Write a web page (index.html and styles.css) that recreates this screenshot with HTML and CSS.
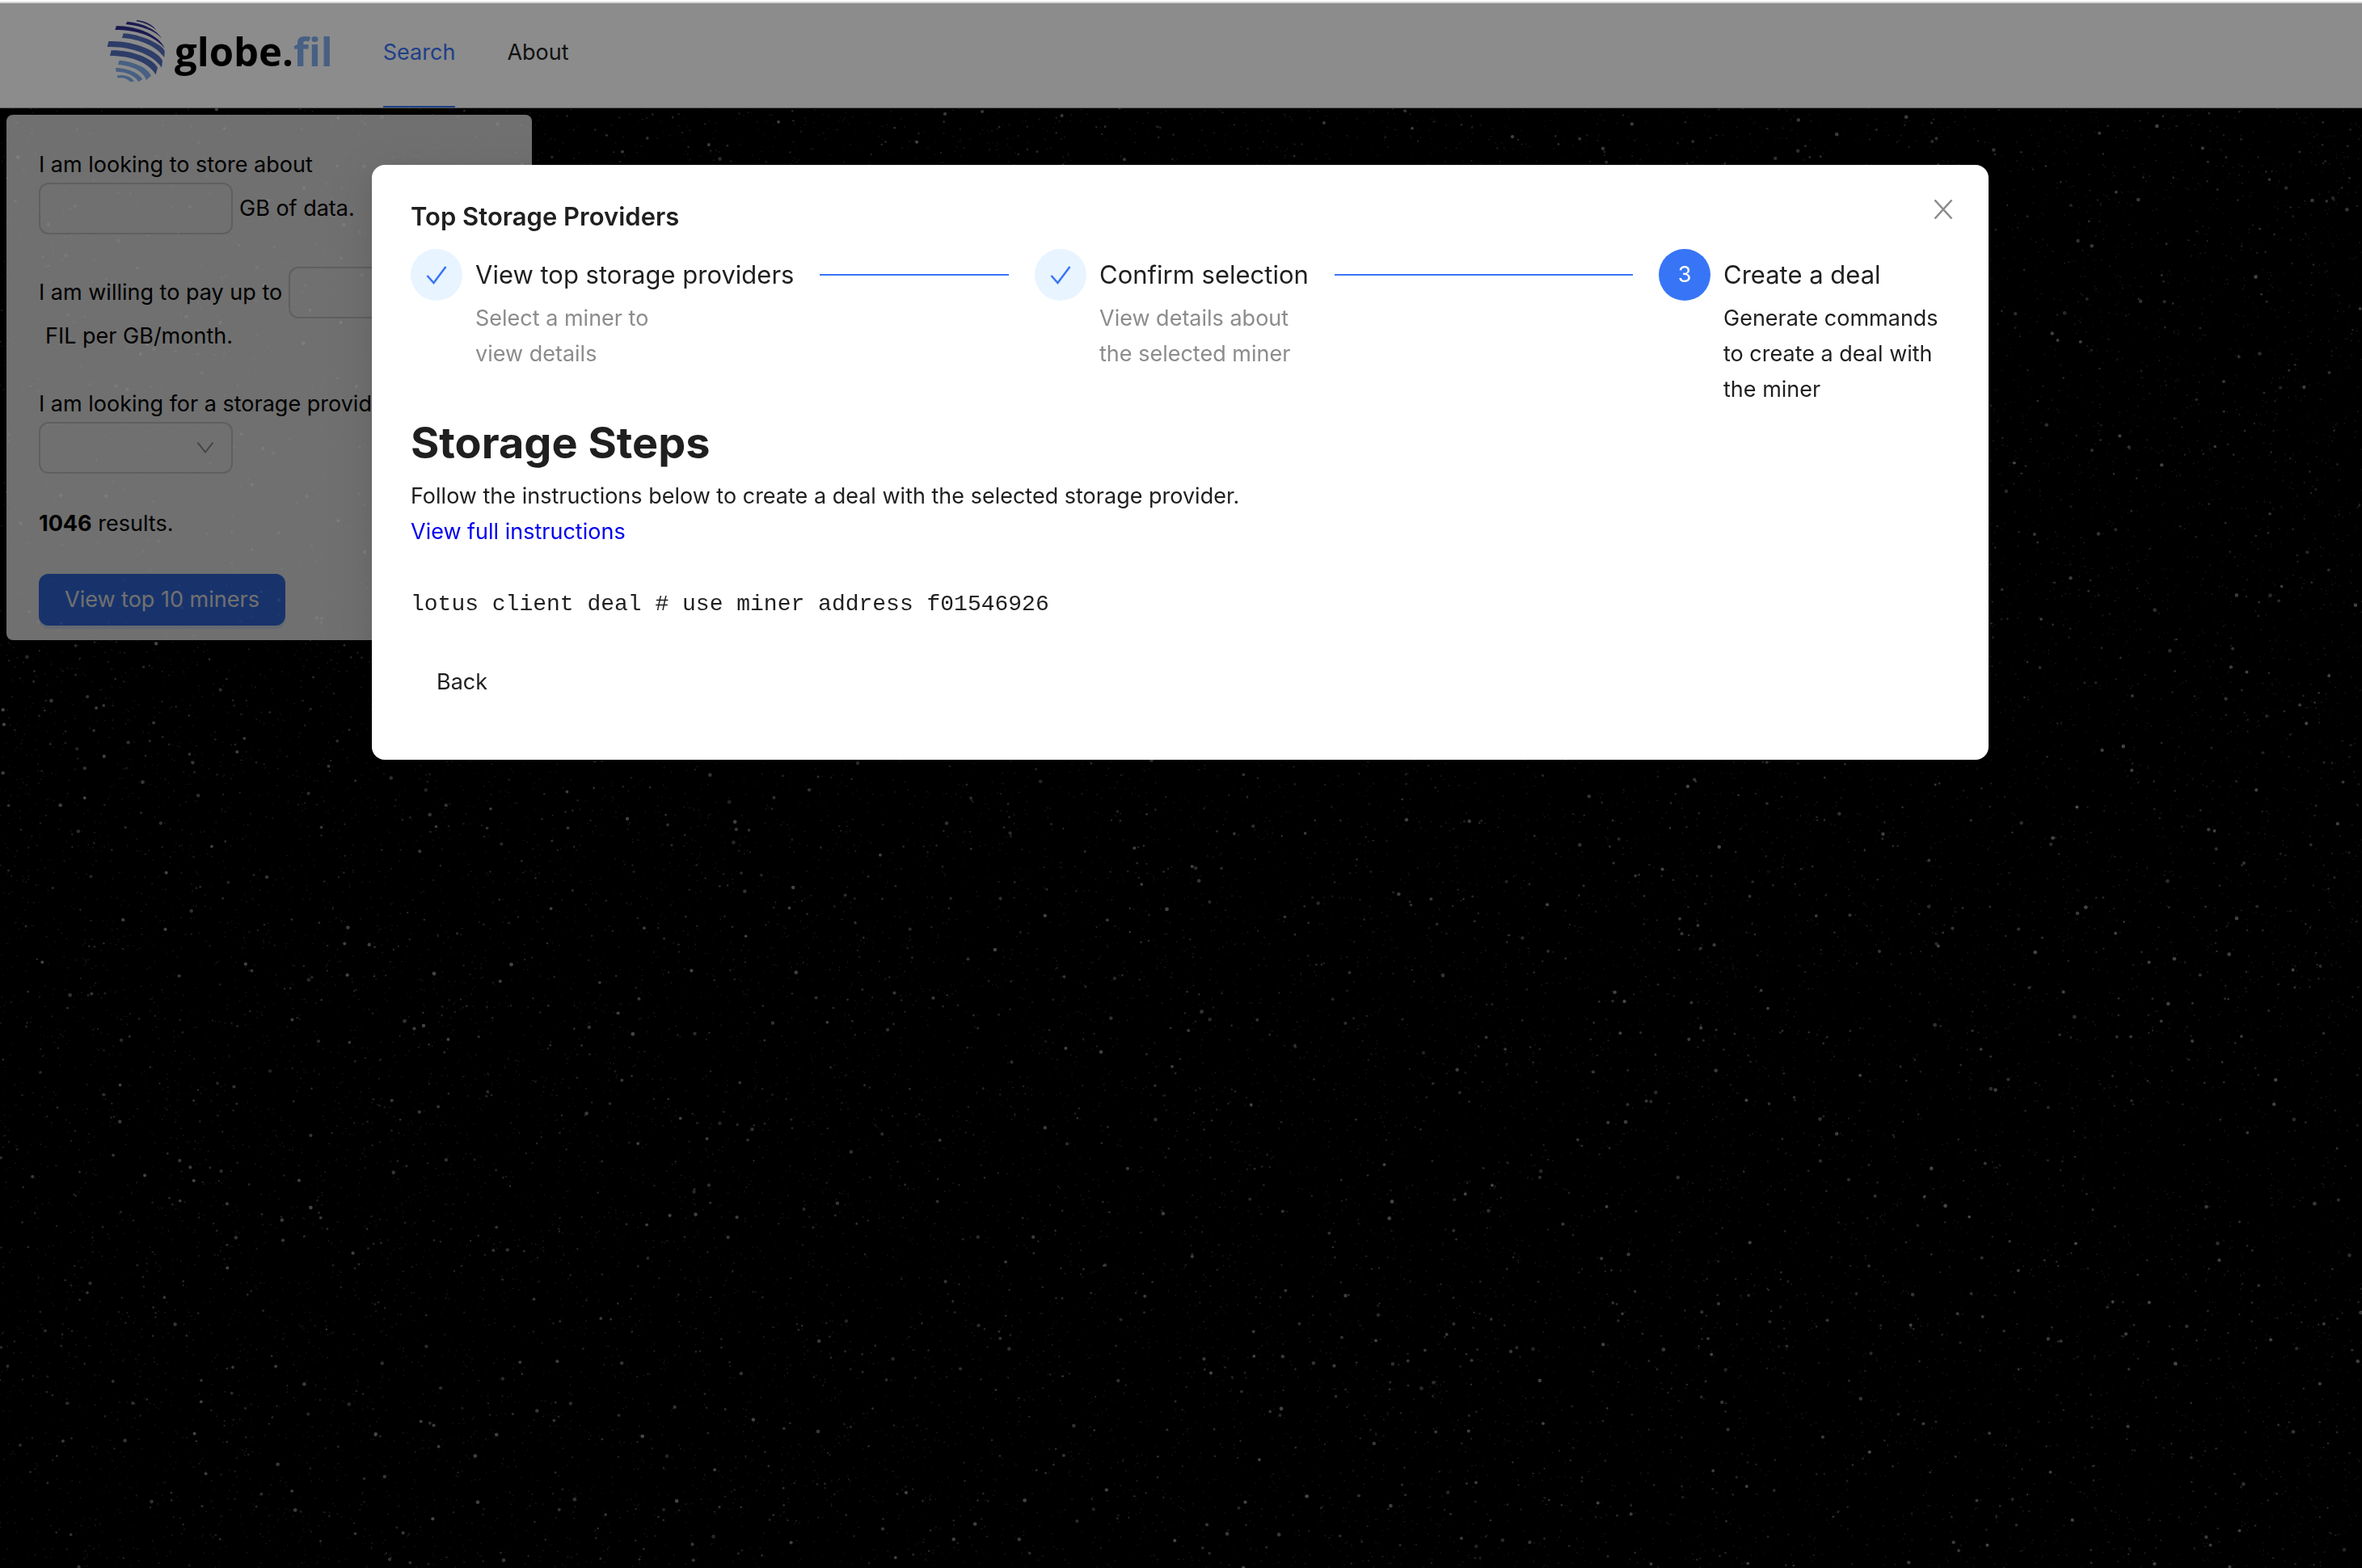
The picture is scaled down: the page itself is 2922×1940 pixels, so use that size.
FILE: index.html
```html
<!DOCTYPE html>
<html lang="en">
<head>
<meta charset="utf-8">
<title>globe.fil</title>
<meta name="viewport" content="width=device-width, initial-scale=1">
<link rel="stylesheet" href="styles.css">
</head>
<body>
<div class="app">
  <canvas class="stars" id="stars"></canvas>

  <header class="header">
    <a class="brand" href="#">
      <svg class="brand-mark" viewBox="36 27 216 234" aria-hidden="true">
        <g fill="#303094">
          <path d="M147 29C180 33 206 45 222 69C200 49 175 39 147 34Z"/>
          <path d="M112 35C170 41 222 65 241 98C215 69 165 51 107 45Z"/>
          <path d="M72 51C150 51 232 86 251 134C215 90 150 66 67 66Z"/>
        </g>
        <g fill="#5570be">
          <path d="M98 79C155 81 240 116 251 144L250 168C218 125 155 99 93 96Z"/>
          <path d="M43 108C130 104 228 143 243 180L240 206C212 160 130 126 38 129Z"/>
          <path d="M53 142C125 140 205 170 225 206L218 232C192 188 130 162 48 162Z"/>
        </g>
        <g fill="#82b0ee">
          <path d="M83 179C130 182 188 204 201 236L183 252C172 220 130 198 78 195Z"/>
          <path d="M69 207C110 208 152 222 169 249L154 259C140 235 110 221 71 221Z"/>
          <path d="M74 236C100 230 128 240 138 257L124 259C112 246 95 241 78 245Z"/>
        </g>
      </svg>
      <span class="brand-name">globe.<span class="brand-tld">fil</span></span>
    </a>
    <nav class="nav">
      <a class="nav-link nav-link-active" href="#search">Search</a>
      <a class="nav-link" href="#about">About</a>
    </nav>
  </header>

  <main class="content">
    <form class="panel">
      <div class="field">
        <label class="line" for="size">I am looking to store about</label>
        <div class="row">
          <input class="control" id="size" type="text">
          <span>GB of data.</span>
        </div>
      </div>
      <div class="field">
        <div class="row">
          <label for="price">I am willing to pay up to</label>
          <input class="control" id="price" type="text">
        </div>
        <span class="line line-indent">FIL per GB/month.</span>
      </div>
      <div class="field">
        <label class="line" for="region">I am looking for a storage provider in</label>
        <div class="select-box">
          <select class="control control-select" id="region"><option></option></select>
          <svg class="select-arrow" viewBox="0 0 24 24" aria-hidden="true"><path d="M2.500 5.500L12 17.500L21.500 5.500" fill="none" stroke="currentColor" stroke-width="2"/></svg>
        </div>
      </div>
      <p class="line"><strong>1046</strong> results.</p>
      <button class="button button-primary" type="button">View top 10 miners</button>
    </form>
  </main>

  <div class="mask"></div>

  <div class="modal-wrap">
    <section class="modal" role="dialog" aria-modal="true" aria-labelledby="modal-title">
      <button class="modal-close" type="button" aria-label="Close">
        <svg viewBox="0 0 24 24" aria-hidden="true"><path d="M1.500 0.500L22.500 23.500M22.500 0.500L1.500 23.500" fill="none" stroke="currentColor" stroke-width="2.500"/></svg>
      </button>
      <h2 class="modal-title" id="modal-title">Top Storage Providers</h2>

      <ol class="steps">
        <li class="step">
          <span class="step-icon"><svg viewBox="0 0 28 28" aria-hidden="true"><path d="M2.500 15L10.500 24L25.500 4" fill="none" stroke="currentColor" stroke-width="2.500"/></svg></span>
          <div class="step-body">
            <div class="step-title">View top storage providers</div>
            <p class="step-text">Select a miner to view details</p>
          </div>
        </li>
        <li class="step">
          <span class="step-icon"><svg viewBox="0 0 28 28" aria-hidden="true"><path d="M2.500 15L10.500 24L25.500 4" fill="none" stroke="currentColor" stroke-width="2.500"/></svg></span>
          <div class="step-body">
            <div class="step-title">Confirm selection</div>
            <p class="step-text">View details about the selected miner</p>
          </div>
        </li>
        <li class="step step-current">
          <span class="step-icon">3</span>
          <div class="step-body">
            <div class="step-title">Create a deal</div>
            <p class="step-text">Generate commands to create a deal with the miner</p>
          </div>
        </li>
      </ol>

      <h1 class="heading">Storage Steps</h1>
      <p class="line">Follow the instructions below to create a deal with the selected storage provider.</p>
      <a class="docs-link" href="#instructions">View full instructions</a>
      <pre class="command"><code>lotus client deal # use miner address f01546926</code></pre>
      <button class="button button-text" type="button">Back</button>
    </section>
  </div>
</div>
<script src="script.js"></script>
</body>
</html>
```

FILE: styles.css
```css
* {
  box-sizing: border-box;
}

body {
  margin: 0;
  border-top: 2px solid #fff;
  background: #000;
  color: #1f1f1f;
  font-family: Inter, "Liberation Sans", sans-serif;
  font-size: 27px;
  line-height: 44px;
}

h1, h2, p, ol, pre {
  margin: 0;
  padding: 0;
}

a {
  text-decoration: none;
}

button, input, select {
  font: inherit;
}

.app {
  position: relative;
  min-height: calc(100vh - 2px);
  border-top: 2px solid #d6d6d6;
  overflow: hidden;
}

.stars {
  position: absolute;
  inset: 0;
  width: 100%;
  height: 100%;
}

/* Header */

.header {
  position: relative;
  display: flex;
  gap: 62px;
  height: 130px;
  padding-left: 132px;
  background: #fff;
  border-bottom: 1px solid #a6a6a6;
}

.brand {
  display: flex;
  align-items: center;
  gap: 12px;
  padding-bottom: 12px;
  color: #000;
}

.brand-mark {
  width: 72px;
  height: 78px;
}

.brand-name {
  font-family: "Open Sans", "Noto Sans", sans-serif;
  font-size: 49px;
  font-weight: 700;
  line-height: 64px;
}

.brand-tld {
  color: #82b0ee;
}

.nav {
  display: flex;
  gap: 64px;
}

.nav-link {
  padding: 39px 0 43px;
  border-bottom: 2px solid transparent;
  color: #1f1f1f;
}

.nav-link-active {
  color: #3875f6;
  border-bottom-color: #3875f6;
}

/* Search panel */

.content {
  position: relative;
  padding: 8px;
}

.panel {
  display: flex;
  flex-direction: column;
  align-items: flex-start;
  gap: 40px;
  width: 650px;
  max-width: 100%;
  padding: 40px 40px 18px;
  border-radius: 8px;
  background: #fff;
  color: #000;
  opacity: 0.8;
}

.field, .line {
  display: block;
}

.line-indent {
  padding-left: 8px;
}

.row {
  display: flex;
  align-items: center;
  gap: 8px;
  white-space: nowrap;
}

.control {
  display: block;
  width: 240px;
  height: 64px;
  padding: 0 20px;
  border: 2px solid #d9d9d9;
  border-radius: 12px;
  background: #fff;
  color: inherit;
}

.control-select {
  appearance: none;
}

.select-box {
  position: relative;
  width: 240px;
}

.select-arrow {
  position: absolute;
  top: 20px;
  right: 22px;
  width: 24px;
  height: 24px;
  color: #9a9a9a;
  pointer-events: none;
}

.button {
  height: 64px;
  padding: 0 32px;
  border: 0;
  border-radius: 12px;
  line-height: 44px;
}

.button-primary {
  background: #3875f6;
  box-shadow: 0 4px 0 rgba(5, 95, 255, 0.1);
  color: #fff;
}

.button-text {
  background: transparent;
  color: #1f1f1f;
}

/* Modal */

.mask {
  position: absolute;
  inset: 0;
  background: rgba(0, 0, 0, 0.45);
}

.modal-wrap {
  position: absolute;
  inset: 0;
  display: flex;
  justify-content: center;
  align-items: flex-start;
  padding: 200px 32px 32px 30px;
}

.modal {
  position: relative;
  width: 2000px;
  max-width: 100%;
  padding: 40px 48px 64px;
  border-radius: 16px;
  background: #fff;
  box-shadow: 0 12px 32px rgba(0, 0, 0, 0.08), 0 6px 12px -8px rgba(0, 0, 0, 0.12), 0 18px 56px 16px rgba(0, 0, 0, 0.05);
}

.modal-close {
  position: absolute;
  top: 33px;
  right: 34px;
  display: flex;
  align-items: center;
  justify-content: center;
  width: 44px;
  height: 44px;
  padding: 0;
  border: 0;
  background: transparent;
  color: #8c8c8c;
}

.modal-close svg {
  width: 24px;
  height: 24px;
}

.modal-title {
  margin-bottom: 16px;
  font-size: 31px;
  font-weight: 600;
  line-height: 48px;
}

.steps {
  display: grid;
  grid-template-columns: 1fr 1fr auto;
  list-style: none;
}

.step {
  display: flex;
  gap: 16px;
  padding-right: 32px;
}

.step-current {
  padding-right: 0;
}

.step-icon {
  display: flex;
  flex: none;
  align-items: center;
  justify-content: center;
  width: 64px;
  height: 64px;
  border-radius: 50%;
  background: #e8f4ff;
  color: #3875f6;
}

.step-icon svg {
  width: 28px;
  height: 28px;
}

.step-current .step-icon {
  background: #3875f6;
  color: #fff;
}

.step-body {
  flex: 1;
}

.step-title {
  display: flex;
  align-items: center;
  gap: 32px;
  font-size: 31px;
  line-height: 64px;
  white-space: nowrap;
}

.step-title::after {
  content: "";
  flex: 1;
  height: 2px;
  background: #3875f6;
}

.step-current .step-title::after {
  content: none;
}

.step-text {
  width: 280px;
  color: #8c8c8c;
}

.step-current .step-text {
  color: #1f1f1f;
}

.heading {
  font-size: 54px;
  font-weight: 700;
  line-height: 88px;
}

.docs-link {
  color: #0000ee;
}

.command {
  margin: 44px 0 42px;
}

.command code {
  font-family: "Liberation Mono", monospace;
  font-size: 28px;
}
```

FILE: script.js
```js
// Night-sky backdrop: many faint specks and a few brighter stars.
const canvas = document.getElementById("stars");
const ctx = canvas.getContext("2d");

function seeded(seed) {
  return function () {
    seed = (seed + 0x6d2b79f5) | 0;
    let t = Math.imul(seed ^ (seed >>> 15), 1 | seed);
    t = (t + Math.imul(t ^ (t >>> 7), 61 | t)) ^ t;
    return ((t ^ (t >>> 14)) >>> 0) / 4294967296;
  };
}

function scatter(random, share, minRadius, maxRadius, minAlpha, maxAlpha) {
  const count = Math.round(canvas.width * canvas.height * share);
  for (let i = 0; i < count; i++) {
    const x = random() * canvas.width;
    const y = random() * canvas.height;
    const radius = minRadius + random() * (maxRadius - minRadius);
    const alpha = minAlpha + random() * (maxAlpha - minAlpha);
    ctx.fillStyle = "rgba(255, 255, 255, " + alpha + ")";
    ctx.beginPath();
    ctx.arc(x, y, radius, 0, Math.PI * 2);
    ctx.fill();
  }
}

function drawStars() {
  canvas.width = canvas.clientWidth;
  canvas.height = canvas.clientHeight;
  const random = seeded(7);
  scatter(random, 0.006, 0.7, 1, 0.06, 0.22);
  scatter(random, 0.0006, 1, 1.5, 0.2, 0.36);
  scatter(random, 0.0002, 1.8, 2.4, 0.26, 0.5);
}

drawStars();
window.addEventListener("resize", drawStars);
```
